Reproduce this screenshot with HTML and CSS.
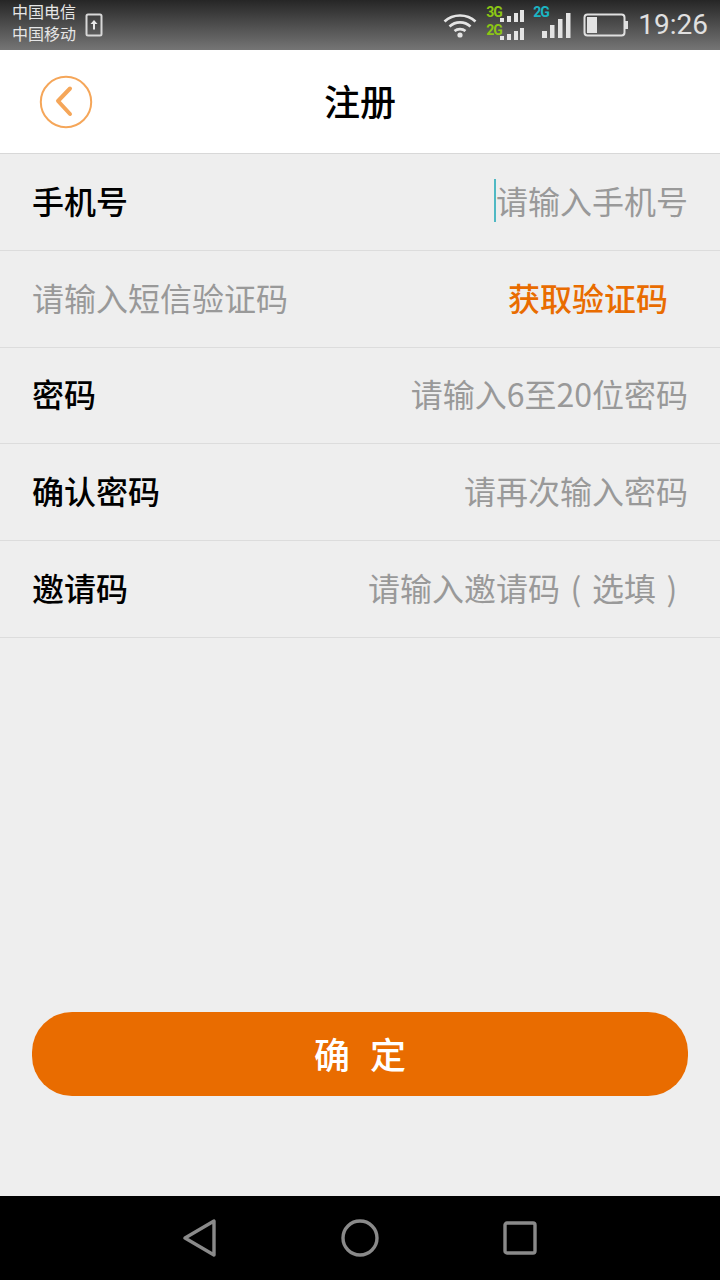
FILE: index.html
```html
<!DOCTYPE html>
<html lang="zh">
<head>
<meta charset="utf-8">
<title>注册</title>
<link rel="stylesheet" href="styles.css">
</head>
<body>
<div class="screen">
  <div class="statusbar">
    <div class="status-left">
      <div class="carriers"><div>中国电信</div><div>中国移动</div></div>
      <svg class="usb" width="18" height="24" viewBox="0 0 18 24"><rect x="1.5" y="1.5" width="15" height="21" rx="1.5" fill="none" stroke="#d8d8d8" stroke-width="2"/><path d="M9 7 L12.5 11 H10 V16.5 H8 V11 H5.5 Z" fill="#e8e8e8"/></svg>
    </div>
    <div class="status-right">
      <svg class="wifi" width="34" height="26" viewBox="0 0 34 26"><g fill="none" stroke="#e4e4e4" stroke-width="2.6"><path d="M1.5 9.5 C10 1.5 24 1.5 32.5 9.5"/><path d="M6.5 14.5 C12.5 9 21.5 9 27.5 14.5"/><path d="M11.5 19 C14.5 16.5 19.5 16.5 22.5 19"/></g><circle cx="17" cy="23" r="2.6" fill="#e4e4e4"/></svg>
      <div class="sims">
        <div class="sim"><span class="net green">3G</span><svg width="24" height="14" viewBox="0 0 24 14"><g fill="#e4e4e4"><rect x="0" y="9" width="4" height="4"/><rect x="7" y="7" width="4" height="6"/><rect x="14" y="4" width="4" height="9"/><rect x="20" y="1" width="4" height="12"/></g></svg></div>
        <div class="sim"><span class="net green">2G</span><svg width="24" height="14" viewBox="0 0 24 14"><g fill="#e4e4e4"><rect x="0" y="9" width="4" height="4"/><rect x="7" y="7" width="4" height="6"/><rect x="14" y="4" width="4" height="9"/><rect x="20" y="1" width="4" height="12"/></g></svg></div>
      </div>
      <div class="sim2">
        <span class="net teal">2G</span>
        <svg width="30" height="26" viewBox="0 0 30 26"><g fill="#e4e4e4"><rect x="1" y="18" width="5" height="7"/><rect x="9" y="12" width="4.5" height="13"/><rect x="17" y="6" width="4.5" height="19"/><rect x="25" y="0" width="4.5" height="25"/></g></svg>
      </div>
      <svg class="battery" width="46" height="24" viewBox="0 0 46 24"><rect x="1.5" y="1.5" width="40" height="21" rx="3" fill="none" stroke="#e0e0e0" stroke-width="2"/><rect x="4" y="4" width="10" height="16" fill="#e4e4e4"/><rect x="42" y="8" width="3" height="8" fill="#e0e0e0"/></svg>
      <span class="time">19:26</span>
    </div>
  </div>

  <header class="topbar">
    <svg class="back" width="54" height="54" viewBox="0 0 54 54"><circle cx="27" cy="27" r="25.2" fill="none" stroke="#f5a659" stroke-width="2"/><path d="M31 13.5 L19 26 L31 39" fill="none" stroke="#f5a659" stroke-width="4" stroke-linecap="round" stroke-linejoin="round"/></svg>
    <h1 class="title">注册</h1>
  </header>

  <main class="content">
    <div class="row"><span class="label">手机号</span><span class="hint with-caret">请输入手机号</span></div>
    <div class="row"><span class="hint">请输入短信验证码</span><span class="code-link">获取验证码</span></div>
    <div class="row"><span class="label">密码</span><span class="hint">请输入6至20位密码</span></div>
    <div class="row"><span class="label">确认密码</span><span class="hint">请再次输入密码</span></div>
    <div class="row"><span class="label">邀请码</span><span class="hint">请输入邀请码<span class="paren">(</span>选填<span class="paren">)</span></span></div>
    <div class="actions"><button class="confirm">确 定</button></div>
  </main>

  <nav class="navbar">
    <svg width="34" height="38" viewBox="0 0 34 38"><path d="M2 19 L31 2 V36 Z" fill="none" stroke="#8a8a8a" stroke-width="3.4" stroke-linejoin="round"/></svg>
    <svg width="38" height="38" viewBox="0 0 38 38"><circle cx="19" cy="19" r="17" fill="none" stroke="#8a8a8a" stroke-width="3.4"/></svg>
    <svg width="34" height="34" viewBox="0 0 34 34"><rect x="2" y="2" width="30" height="30" rx="2" fill="none" stroke="#8a8a8a" stroke-width="3.4"/></svg>
  </nav>
</div>
</body>
</html>
```
FILE: styles.css
```css
* { box-sizing: border-box; }
html, body { margin: 0; padding: 0; }
body { font-family: "Noto Sans CJK SC", "Noto Sans", sans-serif; background: #eeeeee; }
.screen { width: 720px; height: 1280px; display: flex; flex-direction: column; overflow: hidden; }

.statusbar { height: 50px; flex: none; display: flex; justify-content: space-between; align-items: center; padding: 0 12px; background: linear-gradient(#262626, #757575); color: #e6e6e6; }
.status-left { display: flex; align-items: center; gap: 9px; }
.carriers { font-size: 16px; line-height: 22px; padding-bottom: 7px; }
.status-right { display: flex; align-items: center; }
.wifi { margin-left: 1px; margin-right: 7px; margin-bottom: 1px; }
.sims { width: 40px; margin-right: 8px; margin-bottom: 4px; }
.sim { height: 18px; position: relative; }
.sim svg { position: absolute; left: 16px; bottom: 0; }
.net { display: block; font: bold 14px/14px Roboto, sans-serif; letter-spacing: -1px; }
.green { color: #8cc614; padding-left: 2px; }
.teal { color: #1bb5c4; }
.sim2 { position: relative; width: 40px; height: 36px; margin-right: 11px; }
.sim2 .net { position: absolute; left: 1px; top: -2px; }
.sim2 svg { position: absolute; left: 9px; top: 6px; }
.battery { margin-right: 9px; }
.time { font: 28px/1 Roboto, sans-serif; color: #e0e0e0; }

.topbar { height: 104px; flex: none; background: #fff; border-bottom: 1px solid #d8d8d8; display: flex; align-items: center; justify-content: center; position: relative; padding-bottom: 4px; }
.back { position: absolute; left: 39px; top: 25px; }
.title { margin: 0; font-size: 36px; font-weight: 500; color: #000; }

.content { flex: 1; display: flex; flex-direction: column; background: #eeeeee; padding-bottom: 100px; }
.row { height: 96.75px; flex: none; display: flex; align-items: center; justify-content: space-between; padding: 0 32px 4px 32px; border-bottom: 1px solid #dcdcdc; font-size: 32px; }
.label { color: #000; font-weight: 500; }
.hint { color: #999; }
.with-caret { position: relative; }
.with-caret::before { content: ""; position: absolute; left: -2px; top: 2px; width: 2px; height: 43px; background: #4fb9c4; }
.paren { display: inline-block; width: 32px; text-align: center; font-size: 32px; }
.code-link { color: #e96c00; margin-right: 20px; font-weight: 500; }

.actions { margin-top: auto; padding: 0 32px; }
.confirm { display: block; width: 100%; height: 84px; border: 0; border-radius: 40px; background: #e96c00; color: #fff; padding: 0 0 2px; font: 500 36px "Noto Sans CJK SC", sans-serif; word-spacing: 12px; }

.navbar { height: 84px; flex: none; background: #000; display: flex; align-items: center; justify-content: center; gap: 124px; }
```
